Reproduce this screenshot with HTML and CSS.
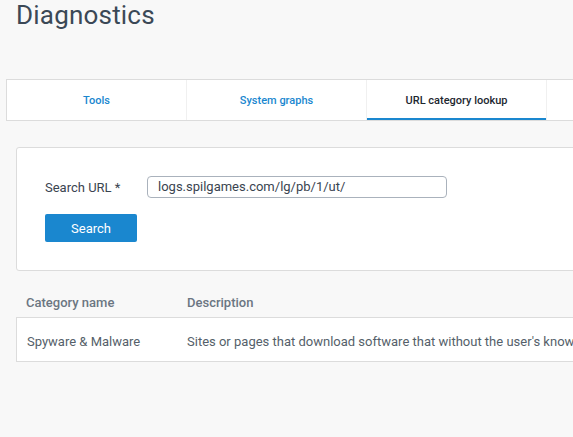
FILE: index.html
```html
<!DOCTYPE html>
<html>
<head>
<meta charset="utf-8">
<link rel="stylesheet" href="styles.css">
</head>
<body>
<div class="page">
  <h1 class="title">Diagnostics</h1>
  <div class="tabs">
    <div class="tab">Tools</div>
    <div class="tab">System graphs</div>
    <div class="tab active">URL category lookup</div>
    <div class="tab"></div>
  </div>
  <div class="panel">
    <div class="field">
      <label class="label">Search URL *</label>
      <div class="input">logs.spilgames.com/lg/pb/1/ut/</div>
    </div>
    <button class="btn">Search</button>
  </div>
  <div class="table">
    <div class="thead">
      <div class="c1">Category name</div>
      <div class="c2">Description</div>
    </div>
    <div class="trow">
      <div class="c1">Spyware &amp; Malware</div>
      <div class="c2">Sites or pages that download software that without the user's knowledge</div>
    </div>
  </div>
</div>
</body>
</html>
```
FILE: styles.css
```css
html, body {
  margin: 0;
  padding: 0;
  background: #f8f8f8;
  overflow: hidden;
}
body {
  font-family: Roboto, "Liberation Sans", sans-serif;
  width: 573px;
  height: 437px;
}
.page {
  width: 900px;
}
.title {
  margin: 0;
  padding: 0 0 0 16px;
  font-size: 26px;
  font-weight: 400;
  line-height: 30px;
  color: #3b4856;
  letter-spacing: 0.2px;
}
.tabs {
  display: flex;
  margin: 49px 0 0 6px;
  background: #fff;
  border: 1px solid #dcdcdc;
  height: 40px;
}
.tab {
  border-right: 1px solid #f0f0f0;
  display: flex;
  align-items: center;
  justify-content: center;
  font-size: 11px;
  font-weight: 500;
  color: #1a87cf;
  box-sizing: border-box;
  flex: none;
  width: 180px;
}
.tab.active {
  color: #1d2730;
  box-shadow: inset 0 -2px 0 #1a87cf;
}
.panel {
  margin: 26px 0 0 16px;
  background: #fff;
  border: 1px solid #dcdcdc;
  border-radius: 3px;
  padding: 28px;
  height: 66px;
}
.field {
  display: flex;
  align-items: center;
}
.label {
  width: 102px;
  font-size: 13px;
  color: #3a4450;
}
.input {
  width: 288px;
  height: 20px;
  border: 1px solid #aab2bc;
  border-radius: 4px;
  padding: 0 0 0 10px;
  font-size: 13px;
  line-height: 20px;
  color: #3a4450;
}
.btn {
  display: block;
  margin-top: 16px;
  width: 92px;
  height: 28px;
  border: none;
  border-radius: 2px;
  background: #1a87cf;
  color: #fff;
  font-family: Roboto, "Liberation Sans", sans-serif;
  font-size: 13px;
  padding: 0;
}
.table {
  margin: 11px 0 0 16px;
}
.thead {
  display: flex;
  align-items: center;
  box-sizing: border-box;
  height: 35px;
  padding-top: 6px;
  font-size: 13px;
  font-weight: 500;
  color: #6b7682;
}
.trow {
  display: flex;
  align-items: center;
  box-sizing: border-box;
  height: 45px;
  padding-top: 3px;
  background: #fff;
  border: 1px solid #dcdcdc;
  font-size: 13px;
  color: #555f6a;
  white-space: nowrap;
}
.c1 {
  padding-left: 10px;
  flex: none;
}
.thead .c1 { width: 161px; }
.trow .c1 { width: 160px; }
.c2 {
  white-space: nowrap;
}
```
